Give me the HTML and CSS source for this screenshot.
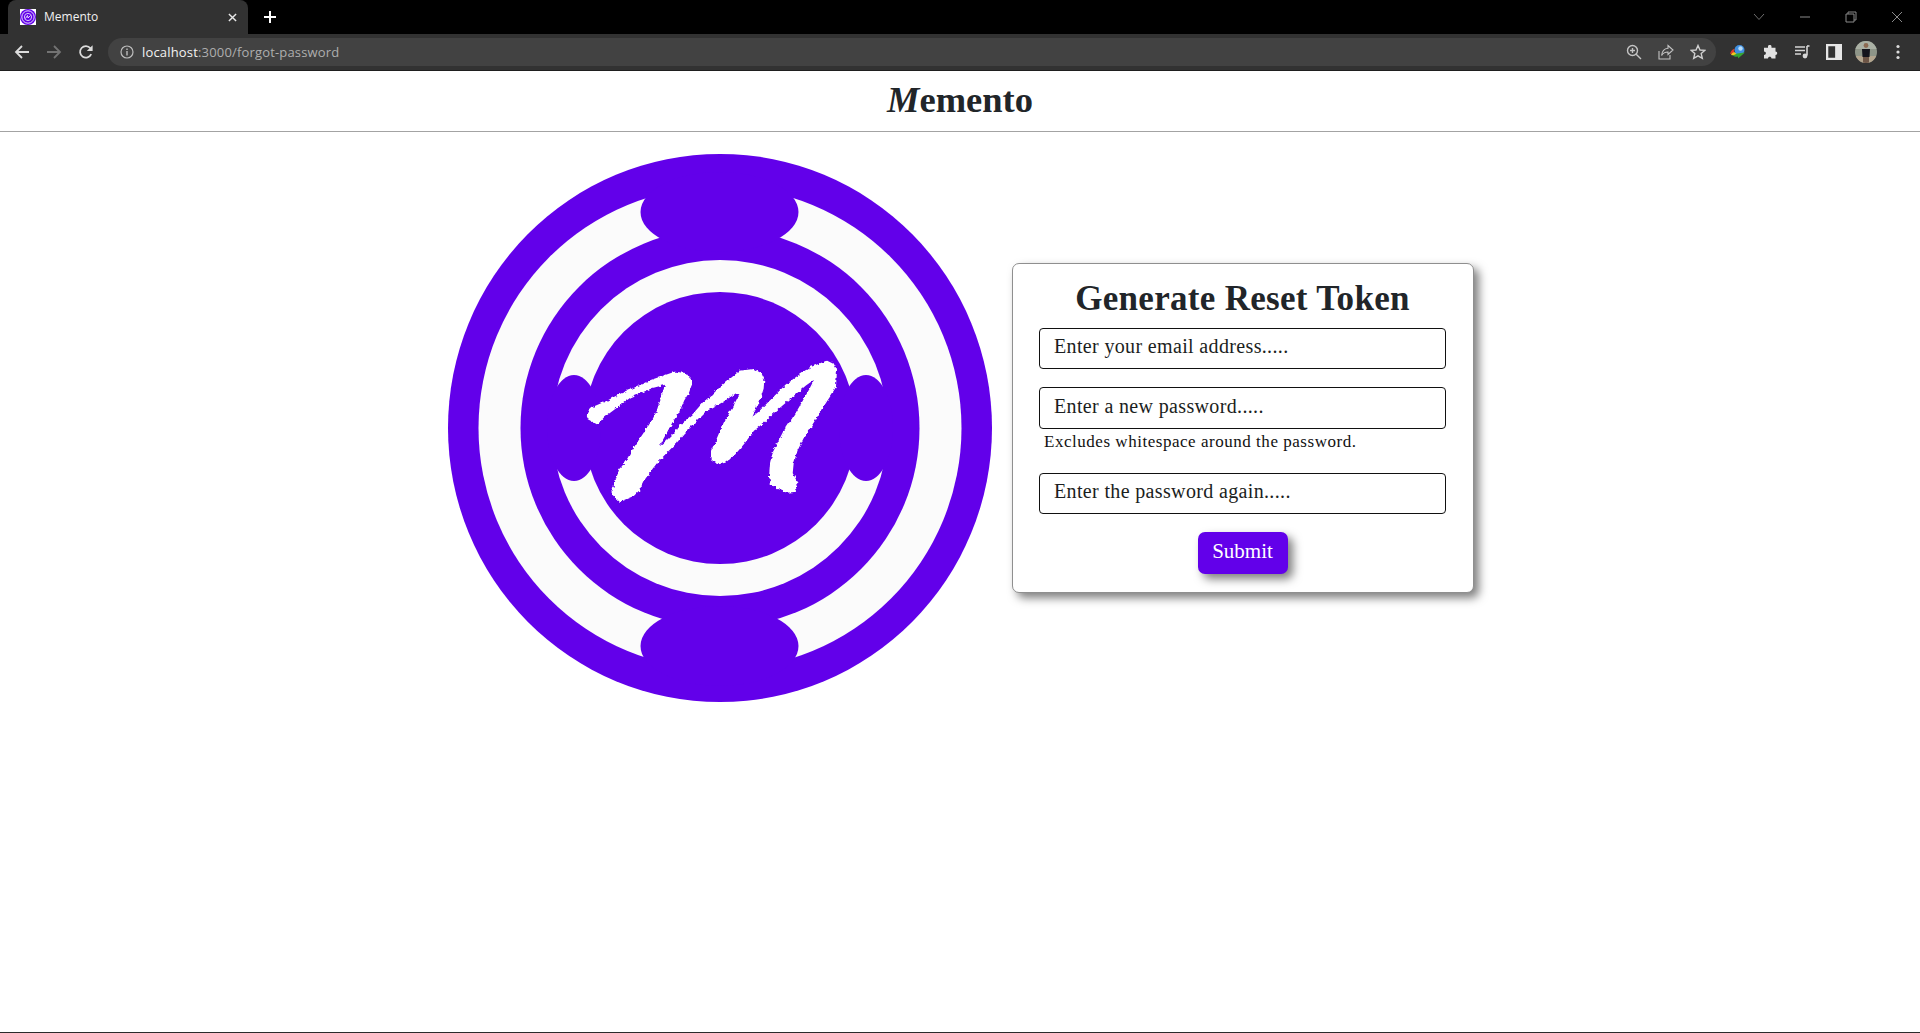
FILE: index.html
```html
<!DOCTYPE html>
<html lang="en">
<head>
<meta charset="utf-8">
<title>Memento</title>
<link rel="stylesheet" href="styles.css">
</head>
<body>
<div class="chrome">
  <div class="tabstrip">
    <div class="tab">
      <svg class="favicon" viewBox="0 0 16 16"><rect width="16" height="16" fill="#fff"/><circle cx="8" cy="8" r="8" fill="#6200ea"/><circle cx="8" cy="8" r="6.2" fill="none" stroke="#e8dcfb" stroke-width="1"/><circle cx="8" cy="8" r="3.6" fill="none" stroke="#d9c6f8" stroke-width="1"/><path d="M5.5 9.5 7.5 6.5 8 9 10.5 6.5" fill="none" stroke="#fff" stroke-width=".8"/></svg>
      <span class="tab-title">Memento</span>
      <svg class="tab-close" viewBox="0 0 10 10"><path d="M1 1 9 9M9 1 1 9" stroke="#e8e8e8" stroke-width="1.6"/></svg>
    </div>
    <svg class="new-tab" viewBox="0 0 12 12"><path d="M6 0V12M0 6H12" stroke="#fff" stroke-width="2"/></svg>
    <div class="window-controls">
      <svg class="wc wc-caret" viewBox="0 0 12 8"><path d="M1 1 6 6.5 11 1" fill="none" stroke="#6e6e6e" stroke-width="1"/></svg>
      <svg class="wc wc-min" viewBox="0 0 12 12"><path d="M1 6H11" stroke="#8a8a8a" stroke-width="1"/></svg>
      <svg class="wc wc-restore" viewBox="0 0 12 12"><path d="M3 3V1H11V9H9M1 3H9V11H1Z" fill="none" stroke="#8a8a8a" stroke-width="1"/></svg>
      <svg class="wc wc-close" viewBox="0 0 12 12"><path d="M1 1 11 11M11 1 1 11" stroke="#8a8a8a" stroke-width="1"/></svg>
    </div>
  </div>
  <div class="toolbar">
    <span class="tool"><svg viewBox="0 0 16 16"><path d="M15 8H2M8 2 2 8l6 6" fill="none" stroke="#dcdcdc" stroke-width="1.8"/></svg></span>
    <span class="tool"><svg viewBox="0 0 16 16"><path d="M1 8H14M8 2l6 6-6 6" fill="none" stroke="#737373" stroke-width="1.8"/></svg></span>
    <span class="tool"><svg viewBox="0 0 16 16"><path d="M13.2 10.2A5.8 5.8 0 1 1 12.4 4.2" fill="none" stroke="#dcdcdc" stroke-width="1.8"/><path d="M14.6 1.2V7H8.8Z" fill="#dcdcdc"/></svg></span>
    <div class="omnibox">
      <svg class="info" viewBox="0 0 14 14"><circle cx="7" cy="7" r="6" fill="none" stroke="#bdbdbd" stroke-width="1.2"/><path d="M7 6V10.5M7 3.4V5" stroke="#bdbdbd" stroke-width="1.4"/></svg>
      <span class="url"><span class="host">localhost</span>:3000/forgot-password</span>
      <span class="tool tool-omni"><svg viewBox="0 0 16 16"><circle cx="6.5" cy="6.5" r="5" fill="none" stroke="#c4c4c4" stroke-width="1.4"/><path d="M10.2 10.2 15 15M4 6.5H9M6.5 4V9" stroke="#c4c4c4" stroke-width="1.4"/></svg></span>
      <span class="tool tool-omni"><svg viewBox="0 0 16 16"><path d="M1 7V15H12V11" fill="none" stroke="#c4c4c4" stroke-width="1.1"/><path d="M10 1.5 15 6 10 10.5V8C7 8 5 9 3.6 11.5 4 7.5 6.500 4.600 10 4.300Z" fill="none" stroke="#c4c4c4" stroke-width="1.1"/></svg></span>
      <span class="tool tool-omni"><svg viewBox="0 0 16 16"><path d="M8 1.500 10 6 14.800 6.400 11.200 9.600 12.300 14.400 8 11.800 3.700 14.400 4.800 9.600 1.200 6.400 6 6Z" fill="none" stroke="#d0d0d0" stroke-width="1.4"/></svg></span>
    </div>
    <span class="tool tool-first"><svg viewBox="0 0 16 16"><path d="M0 10C1 6 3.500 4.500 5 5 3.500 6 3.500 7.500 5 9Z" fill="#e23c2a"/><path d="M1 11C2 8.500 4 7.500 6 9L9 9 7 12Z" fill="#f2c81e"/><circle cx="9.500" cy="6" r="5" fill="#3f8fe0"/><circle cx="10.500" cy="4.500" r="2.200" fill="#b8dcf8"/><path d="M3 11.500 7 9.500 15 8.500 8 14.500 8 12.500C6 13 4.500 13 3 11.500Z" fill="#35a532"/></svg></span>
    <span class="tool"><svg viewBox="0 0 16 16"><path d="M6 2.500C6 .6 9.500 .6 9.500 2.500V3.800H13.500V7.500C15.800 7.500 15.800 11 13.500 11V14.500H9.500C9.500 12 6 12 6 14.500H2V11C4.500 11 4.500 7.500 2 7.500V3.800H6Z" fill="#e2e2e2"/></svg></span>
    <span class="tool"><svg viewBox="0 0 16 16"><path d="M1 3H11M1 6.500H11M1 10H7" stroke="#d6d6d6" stroke-width="1.400"/><path d="M13 2V11.500" stroke="#d6d6d6" stroke-width="1.600"/><path d="M13 2H15.500" stroke="#d6d6d6" stroke-width="1.600"/><circle cx="11" cy="12" r="2.400" fill="#d6d6d6"/></svg></span>
    <span class="tool"><svg viewBox="0 0 14 14"><path d="M0 0H14V14H0ZM2 2V12H8V2Z" fill="#e6e6e6" fill-rule="evenodd"/></svg></span>
    <span class="tool tool-avatar"><svg viewBox="0 0 22 22"><defs><clipPath id="avatar-clip"><circle cx="11" cy="11" r="11"/></clipPath></defs><g clip-path="url(#avatar-clip)"><rect width="22" height="22" fill="#8e9588"/><rect y="0" width="22" height="8" fill="#aab0a4"/><rect y="15" width="22" height="7" fill="#b3a58e"/><circle cx="11" cy="4.500" r="2.400" fill="#8c6a52"/><path d="M7 8H15L14.500 16H7.500Z" fill="#14141c"/><path d="M8 16H14V22H8Z" fill="#6d5546"/></g></svg></span>
    <span class="tool"><svg viewBox="0 0 4 16" class="dots"><circle cx="2" cy="2.500" r="1.600" fill="#dcdcdc"/><circle cx="2" cy="8" r="1.600" fill="#dcdcdc"/><circle cx="2" cy="13.500" r="1.600" fill="#dcdcdc"/></svg></span>
  </div>
</div>
<div class="page">
  <header class="site-header"><span class="brand"><span class="brand-m">M</span>emento</span></header>
  <main class="content">
    <svg class="logo" viewBox="448 154 544 548" role="img" aria-label="Memento logo">
      <defs>
        <filter id="rough" x="-5%" y="-5%" width="110%" height="110%">
          <feTurbulence type="fractalNoise" baseFrequency=".28" numOctaves="2" seed="4" result="noise"/>
          <feDisplacementMap in="SourceGraphic" in2="noise" scale="4" xChannelSelector="R" yChannelSelector="G"/>
        </filter>
      </defs>
      <ellipse class="purple" cx="720" cy="428" rx="272" ry="274"/>
      <circle class="ring" cx="720" cy="428" r="241.500"/>
      <circle class="purple" cx="720" cy="428" r="199.500"/>
      <ellipse class="purple" cx="719.500" cy="212" rx="79" ry="40"/>
      <ellipse class="purple" cx="719.500" cy="646" rx="79" ry="40"/>
      <circle class="ring" cx="720" cy="428" r="168"/>
      <circle class="purple" cx="720" cy="428" r="136"/>
      <ellipse class="purple" cx="574" cy="428" rx="27" ry="53"/>
      <ellipse class="purple" cx="866" cy="428" rx="27" ry="53"/>
      <g filter="url(#rough)">
        <path class="letter" transform="translate(520 320) scale(.33333)" d="M205 295C200 280 208 270 222 262L262 245 300 225 330 212 345 205 395 182 430 170 465 158 497 162 510 180 512 195 505 215 490 240 475 275 455 305 425 360 410 390 440 365 470 335 490 310 520 285 550 250 580 225 600 205 630 180 660 155 700 150 722 162 730 180 728 205 720 230 705 265 690 300 715 280 745 250 775 220 800 195 835 170 870 145 920 125 940 135 948 150 945 200 930 225 920 240 895 280 870 320 850 350 830 390 818 430 815 460 828 485 830 495 822 513 800 515 775 505 755 490 750 470 753 430 760 400 775 370 790 340 810 310 830 280 850 245 870 210 890 170 855 195 820 225 785 255 750 285 725 310 700 330 670 370 640 405 615 425 595 430 578 418 577 395 600 340 625 290 645 255 660 225 650 215 605 245 560 270 525 305 490 340 465 370 440 395 415 420 395 445 370 480 355 510 340 525 300 542 282 525 280 510 290 480 300 450 320 425 340 390 360 360 380 330 400 300 415 270 425 235 440 190 400 200 365 215 330 230 290 260 250 290 232 310Z"/>
      </g>
    </svg>
    <section class="card">
      <h1 class="card-title">Generate Reset Token</h1>
      <form class="form">
        <input class="field" type="email" placeholder="Enter your email address.....">
        <input class="field field-second" type="password" placeholder="Enter a new password.....">
        <p class="hint">Excludes whitespace around the password.</p>
        <input class="field" type="password" placeholder="Enter the password again.....">
        <button class="submit" type="button">Submit</button>
      </form>
    </section>
  </main>
</div>
</body>
</html>
```
FILE: styles.css
```css
* { box-sizing: border-box; }
html, body { margin: 0; height: 100%; }
body {
  display: flex;
  flex-direction: column;
  height: 1033px;
  overflow: hidden;
  background: #fff;
  font-family: "Liberation Serif", serif;
  color: #212529;
}

/* Browser chrome */
.chrome { flex: none; font-family: "Open Sans", "Noto Sans", sans-serif; }
.tabstrip { display: flex; align-items: center; height: 34px; background: #000; }
.tab {
  display: flex;
  align-items: center;
  width: 240px;
  height: 34px;
  margin-left: 8px;
  padding: 0 11px 0 12px;
  background: #323232;
  border-radius: 8px 8px 0 0;
}
.favicon { width: 16px; height: 16px; flex: none; }
.tab-title { flex: 1; margin: 0 0 1px 8px; font-size: 12px; color: #f0f0f0; }
.tab-close { width: 9px; height: 9px; flex: none; }
.new-tab { width: 12px; height: 12px; margin-left: 16px; }
.window-controls { display: flex; align-items: center; margin-left: auto; padding-right: 17px; }
.wc { width: 12px; height: 12px; margin-left: 34px; }
.wc-caret { height: 8px; }
.toolbar {
  display: flex;
  align-items: center;
  height: 37px;
  padding: 0 6px 1px;
  background: #323232;
  border-bottom: 1px solid #1f1f1f;
}
.tool { display: flex; flex: none; align-items: center; justify-content: center; width: 32px; height: 28px; }
.tool svg { width: 16px; height: 16px; }
.tool .dots { width: 4px; }
.tool-avatar svg { width: 22px; height: 22px; }
.tool-first { margin-left: 6px; }
.omnibox {
  display: flex;
  flex: 1;
  align-items: center;
  height: 28px;
  margin-left: 6px;
  padding: 0 2px 0 12px;
  background: #424242;
  border-radius: 14px;
}
.info { width: 14px; height: 14px; flex: none; }
.url { flex: 1; margin-left: 8px; font-size: 13px; letter-spacing: .17px; color: #aeaeae; }
.host { color: #f2f2f2; }

/* Page */
.page { display: flex; flex: 1; flex-direction: column; border-bottom: 1px solid #2b2b2b; }
.site-header {
  display: flex;
  flex: none;
  align-items: center;
  justify-content: center;
  height: 61px;
  padding-bottom: 2px;
  border-bottom: 1px solid #a3a3a3;
}
.brand { font-size: 36.500px; font-weight: 700; line-height: 1; color: #212529; }
.brand-m { font-style: italic; }
.content { display: flex; align-items: center; justify-content: center; gap: 20px; padding: 22px 0 0 2px; }
.logo { display: block; flex: none; width: 544px; height: 548px; }
.purple { fill: #6200ea; }
.ring { fill: #fbfbfb; }
.letter { fill: #fff; stroke: #fff; stroke-width: 6; stroke-linejoin: round; }

.card {
  flex: none;
  width: 462px;
  height: 330px;
  padding: 0 27px 0 26px;
  background: #fff;
  border: 1px solid #8f8f8f;
  border-radius: 7px;
  box-shadow: 5px 5px 10px rgba(0, 0, 0, .5);
}
.card-title {
  height: 64px;
  margin: 0;
  padding-top: 14px;
  font-size: 35px;
  font-weight: 700;
  line-height: 42px;
  text-align: center;
  letter-spacing: .3px;
}
.form { display: flex; flex-direction: column; }
.field {
  height: 41px;
  padding: 0 14px 4px;
  background: #fff;
  border: 1.500px solid #111;
  border-radius: 4px;
  font-family: inherit;
  font-size: 20px;
  letter-spacing: .35px;
  color: #212529;
}
.field::placeholder { color: #1b1e21; opacity: 1; }
.field-second { height: 42px; margin-top: 18px; }
.hint { height: 44px; margin: 0; padding: 2px 0 0 5px; font-size: 17px; letter-spacing: .53px; line-height: 22px; color: #111; }
.submit {
  align-self: center;
  width: 90px;
  height: 42px;
  margin-top: 18px;
  padding: 0 0 4px;
  background: #6200ea;
  border: 0;
  border-radius: 7px;
  box-shadow: 5px 5px 10px rgba(0, 0, 0, .5);
  font-family: inherit;
  font-size: 21px;
  color: #fff;
}
```
